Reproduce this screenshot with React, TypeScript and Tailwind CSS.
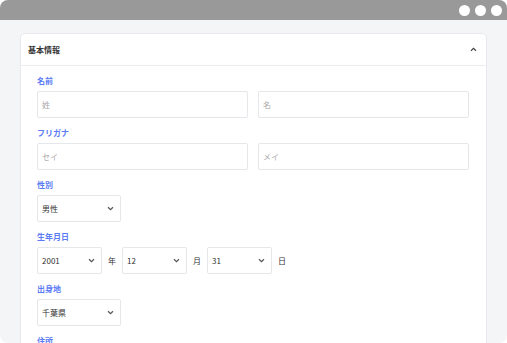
import React from "react";

const font = { fontFamily: '"Noto Sans CJK JP", "Noto Sans", sans-serif' };

function ChevronDown() {
  return (
    <svg width="7" height="5" viewBox="0 0 7 5" className="shrink-0">
      <path d="M1 1.2 L3.5 3.6 L6 1.2" fill="none" stroke="#555" strokeWidth="1.2" />
    </svg>
  );
}

function Label({ children }: { children: React.ReactNode }) {
  return <div className="text-[8px] leading-[11px] font-bold text-[#5b7cf5] mb-[5px]">{children}</div>;
}

function Input({ placeholder }: { placeholder: string }) {
  return (
    <div className="flex-1 h-[27px] border border-[#e6e7ea] rounded-[2px] flex items-center px-[4px] text-[8px] text-[#aaa]">
      {placeholder}
    </div>
  );
}

function Select({ value, w }: { value: string; w: string }) {
  return (
    <div className={`${w} h-[27px] border border-[#e6e7ea] rounded-[2px] flex items-center justify-between pl-[4px] pr-[6px] text-[8px] text-[#333]`}>
      <span>{value}</span>
      <ChevronDown />
    </div>
  );
}

export default function App() {
  return (
    <div className="w-[507px] h-[343px] bg-white" style={font}>
      <div className="w-[507px] h-[343px] rounded-[8px] overflow-hidden bg-[#f4f5f7] flex flex-col">
        <div className="h-[20px] bg-[#999999] flex items-center justify-end gap-[5px] pr-[5px] shrink-0">
          <div className="w-[11px] h-[11px] rounded-full bg-white" />
          <div className="w-[11px] h-[11px] rounded-full bg-white" />
          <div className="w-[11px] h-[11px] rounded-full bg-white" />
        </div>
        <div className="px-[20px] pt-[13px] flex-1 min-h-0">
          <div className="bg-white rounded-[5px] border border-[#e8e9ec] pb-[40px]">
            <div className="h-[32px] border-b border-[#ececef] flex items-center justify-between pl-[7px] pr-[9px]">
              <span className="text-[8px] font-bold text-[#333]">基本情報</span>
              <svg width="7" height="5" viewBox="0 0 7 5">
                <path d="M1 3.8 L3.5 1.4 L6 3.8" fill="none" stroke="#444" strokeWidth="1.2" />
              </svg>
            </div>
            <div className="pl-[16px] pr-[17px] pt-[9px] flex flex-col gap-[9px]">
              <div>
                <Label>名前</Label>
                <div className="flex gap-[10px]">
                  <Input placeholder="姓" />
                  <Input placeholder="名" />
                </div>
              </div>
              <div>
                <Label>フリガナ</Label>
                <div className="flex gap-[10px]">
                  <Input placeholder="セイ" />
                  <Input placeholder="メイ" />
                </div>
              </div>
              <div>
                <Label>性別</Label>
                <Select value="男性" w="w-[84px]" />
              </div>
              <div>
                <Label>生年月日</Label>
                <div className="flex items-center gap-[6px] text-[8px] text-[#333]">
                  <Select value="2001" w="w-[65px]" />
                  <span>年</span>
                  <Select value="12" w="w-[65px]" />
                  <span>月</span>
                  <Select value="31" w="w-[65px]" />
                  <span>日</span>
                </div>
              </div>
              <div>
                <Label>出身地</Label>
                <Select value="千葉県" w="w-[84px]" />
              </div>
              <div>
                <Label>住所</Label>
              </div>
            </div>
          </div>
        </div>
      </div>
    </div>
  );
}
